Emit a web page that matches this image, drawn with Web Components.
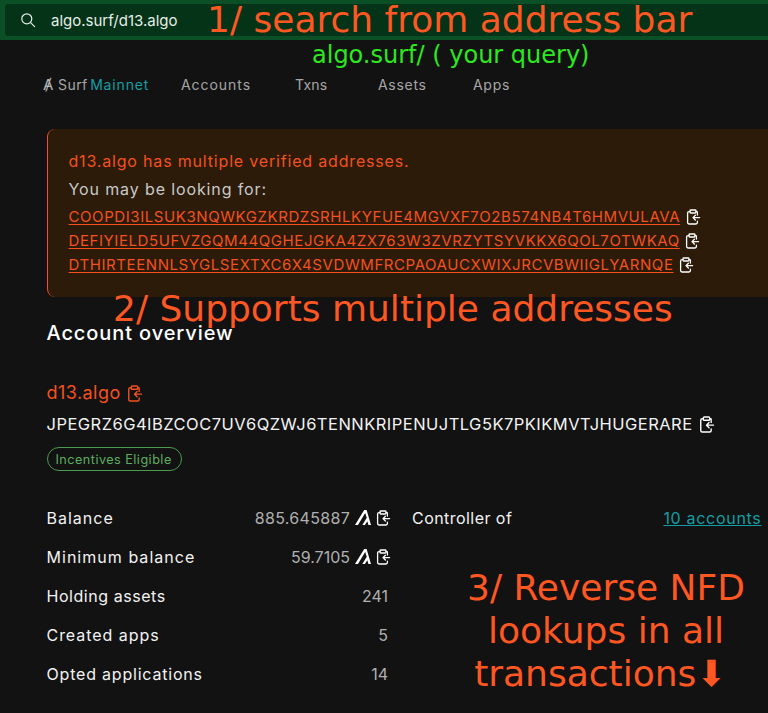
<!doctype html>
<html><head><meta charset="utf-8">
<style>
html,body{margin:0;padding:0;background:#121212;height:713px;overflow:hidden}
body{font-family:"Inter","Liberation Sans",sans-serif;color:#fff}
</style></head><body>
<surf-app></surf-app>
<script>
const copy=(c='#fff',s=16)=>`<svg width="${s}" height="${s}" viewBox="0 0 16 16" fill="none" stroke="${c}" stroke-width="1.3" stroke-linecap="round" stroke-linejoin="round" style="flex:none"><path d="M5 2.6H4A1.4 1.4 0 0 0 2.6 4v9.6A1.4 1.4 0 0 0 4 15h7a1.4 1.4 0 0 0 1.4-1.4v-1.4"/><path d="M11 2.6h.9a.5.5 0 0 1 .5.5V6"/><rect x="5" y="1" width="6" height="3" rx=".8"/><path d="M14.6 8.6H8.2M10.4 6.2 8 8.6l2.4 2.4"/></svg>`;
const algo=`<svg width="16" height="15" viewBox="0 0 113 113" preserveAspectRatio="none" fill="#fff" style="flex:none"><path d="M0 113 65 0H82L113 113H95L87 84 70 113H52L83 58 72 22 21 113Z"/></svg>`;
function def(name,html){customElements.define(name,class extends HTMLElement{constructor(){super();this.attachShadow({mode:'open'}).innerHTML=typeof html==='function'?html(this):html}})}
def('surf-search',`<style>:host{display:block;background:#0b4f27;padding:4px 0 4px 5px;height:32px}
.b{height:32px;background:#043317;border-radius:4px 0 0 4px;display:flex;align-items:center;padding-left:15px;gap:15px;font:15px "Inter",sans-serif;color:#e6eee8}
</style><div class="b"><svg width="16" height="16" viewBox="0 0 16 16" fill="none" stroke="#e6eee8" stroke-width="1.2" stroke-linecap="round"><circle cx="6.8" cy="6.8" r="5"/><path d="m10.6 10.6 4 4"/></svg><span>algo.surf/d13.algo</span></div>`);
def('surf-nav',`<style>:host{display:flex;align-items:center;height:24px;margin-top:32px;padding-left:43px;font:14px "Inter",sans-serif;color:#a6a6a6}
.brand{display:flex;align-items:baseline;gap:2.5px;width:138px}.m{color:#139ea3}span.k{letter-spacing:.4px}
nav{display:flex}nav span{letter-spacing:.7px}</style>
<div class="brand"><span class="k"><span style="color:#b5b5b5;font-size:15px">Ⱥ</span> Surf</span><span class="m k" style="letter-spacing:.85px">Mainnet</span></div>
<nav><span style="width:114px;letter-spacing:.95px">Accounts</span><span style="width:83px;letter-spacing:.25px">Txns</span><span style="width:95px">Assets</span><span>Apps</span></nav>`);
def('surf-alert',`<style>:host{display:block;margin:33px 0 0 47px;background:#2b1b08;border-left:1.5px solid #f4511e;border-radius:8px 0 0 8px;height:168px;padding:22px 0 0 20.5px;box-sizing:border-box;font:16px/20px "Inter",sans-serif}
.t{color:#f4511e;letter-spacing:.82px}.s{color:#c9c9c9;margin-top:8px;letter-spacing:.88px}
.l{display:flex;align-items:center;gap:4.5px;height:24px;color:#f4511e;font-size:15px;letter-spacing:.58px}
.l span{text-decoration:underline;text-underline-offset:2px}.ls{margin-top:6px}</style>
<div class="t">d13.algo has multiple verified addresses.</div><div class="s">You may be looking for:</div>
<div class="ls"><div class="l"><span>COOPDI3ILSUK3NQWKGZKRDZSRHLKYFUE4MGVXF7O2B574NB4T6HMVULAVA</span>${copy()}</div>
<div class="l"><span>DEFIYIELD5UFVZGQM44QGHEJGKA4ZX763W3ZVRZYTSYVKKX6QOL7OTWKAQ</span>${copy()}</div>
<div class="l"><span>DTHIRTEENNLSYGLSEXTXC6X4SVDWMFRCPAOAUCXWIXJRCVBWIIGLYARNQE</span>${copy()}</div></div>`);
def('surf-overview',`<style>:host{display:block;margin:23px 0 0 46.5px;font:16px "Inter",sans-serif;color:#fff}
h2{font:500 20px/26px "Inter",sans-serif;margin:0;letter-spacing:.9px}
.nfd{display:flex;align-items:center;gap:5.5px;color:#f4511e;font-size:18px;line-height:24px;margin-top:35px;letter-spacing:.45px}
.addr{display:flex;align-items:center;gap:5px;line-height:24px;margin-top:7px;font-size:16.5px;letter-spacing:.47px;color:#f2f2f2}
.chip{display:inline-flex;align-items:center;box-sizing:border-box;height:24px;margin-top:11px;padding:0 9px 0 8px;border:1px solid #4c9a50;border-radius:12px;color:#5cae61;font-size:12.7px;letter-spacing:.45px}
.grid{display:grid;grid-template-columns:341.5px 349.5px;column-gap:24px;margin-top:27px;align-items:start}
.row{display:flex;justify-content:space-between;align-items:center;height:39px;font-size:16px;color:#f2f2f2;letter-spacing:.7px}
.v{display:flex;align-items:center;gap:5px;color:#b0b0b0;letter-spacing:0}
.v svg:last-child{margin:0 -3px 0 -1px}
.link{color:#139ea3;text-decoration:underline}
</style>
<h2>Account overview</h2>
<div class="nfd"><span>d13.algo</span>${copy('#f4511e',17)}</div>
<div class="addr"><span>JPEGRZ6G4IBZCOC7UV6QZWJ6TENNKRIPENUJTLG5K7PKIKMVTJHUGERARE</span>${copy('#fff',17)}</div>
<div class="chip">Incentives Eligible</div>
<div class="grid"><div>
<div class="row"><span style="letter-spacing:1px">Balance</span><span class="v" style="letter-spacing:.3px">885.645887 ${algo}${copy()}</span></div>
<div class="row"><span style="letter-spacing:1.03px">Minimum balance</span><span class="v">59.7105 ${algo}${copy()}</span></div>
<div class="row"><span style="letter-spacing:.55px">Holding assets</span><span class="v">241</span></div>
<div class="row"><span style="letter-spacing:.95px">Created apps</span><span class="v">5</span></div>
<div class="row"><span style="letter-spacing:.8px">Opted applications</span><span class="v">14</span></div>
</div><div><div class="row"><span style="letter-spacing:.45px">Controller of</span><span class="link">10 accounts</span></div></div></div>`);
def('surf-note',el=>`<style>:host{position:absolute;white-space:pre;text-align:center;font-family:"DejaVu Sans",sans-serif;color:${el.getAttribute('c')||'#ff5722'};font-size:${el.getAttribute('s')}px;line-height:${el.getAttribute('lh')||'1.2'};left:${el.getAttribute('x')}px;top:${el.getAttribute('y')}px}</style><slot></slot>`);
def('surf-app',`<style>:host{display:block;position:relative;width:768px;height:713px;overflow:hidden;background:#121212}</style>
<surf-search></surf-search><surf-nav></surf-nav><surf-alert></surf-alert><surf-overview></surf-overview>
<surf-note x="207" y="-2" s="36">1/ search from address bar</surf-note>
<surf-note x="312" y="41" s="24" c="#2ce81f">algo.surf/ ( your query)</surf-note>
<surf-note x="113" y="287" s="36">2/ Supports multiple addresses</surf-note>
<surf-note x="467" y="566" s="36" lh="43px">3/ Reverse NFD
lookups in all
transactions⬇ </surf-note>`);
</script></body></html>
